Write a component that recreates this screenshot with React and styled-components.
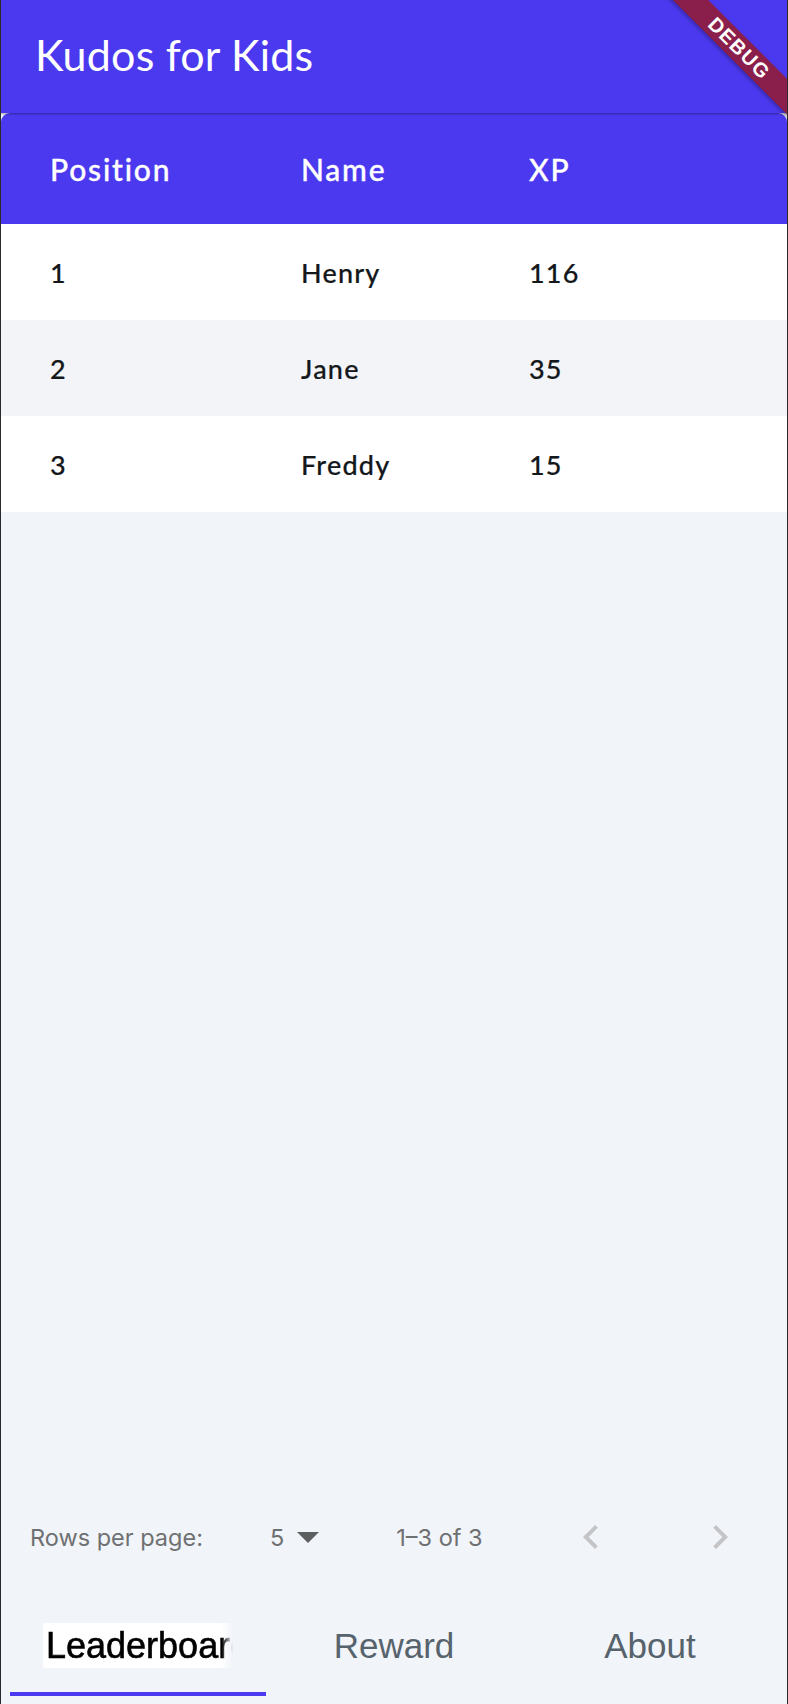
import React from 'react';
import styled, { createGlobalStyle } from 'styled-components';

const GlobalStyle = createGlobalStyle`
  html, body {
    margin: 0;
    padding: 0;
    background: #f1f4f8;
  }
  * { box-sizing: border-box; }
`;

const players = [
  { pos: 1, name: 'Henry', xp: 116 },
  { pos: 2, name: 'Jane', xp: 35 },
  { pos: 3, name: 'Freddy', xp: 15 },
];

const Page = styled.div`
  position: relative;
  width: 788px;
  height: 1704px;
  display: flex;
  flex-direction: column;
  background: #f1f4f8;
  border-left: 1px solid #2b2b2b;
  border-right: 1px solid #2b2b2b;
  overflow: hidden;
`;

const AppBar = styled.header`
  height: 113px;
  flex-shrink: 0;
  display: flex;
  align-items: center;
  padding-left: 34px;
  background: #4b39ef;
  box-shadow: 0 1px 2px rgba(0, 0, 0, 0.35);
  position: relative;
  z-index: 2;
`;

const Title = styled.h1`
  margin: 0 0 4px;
  font-family: Lato, 'Noto Sans', sans-serif;
  font-weight: 400;
  font-size: 43px;
  color: #ffffff;
  letter-spacing: 0.2px;
`;

const Banner = styled.div`
  position: absolute;
  top: 0;
  right: 0;
  width: 150px;
  height: 150px;
  overflow: hidden;
  pointer-events: none;
  z-index: 5;
`;

const Ribbon = styled.div`
  position: absolute;
  top: 36px;
  right: -62px;
  width: 220px;
  height: 25px;
  background: #8b1f4c;
  transform: rotate(45deg);
  display: flex;
  align-items: center;
  justify-content: center;
  box-shadow: 0 2px 4px rgba(0, 0, 0, 0.3);
  font-family: 'Liberation Sans', Arial, sans-serif;
  font-weight: 700;
  font-size: 20px;
  letter-spacing: 1.2px;
  color: #ffffff;
`;

const Table = styled.section`
  flex: 1;
  display: flex;
  flex-direction: column;
`;

const Row = styled.div`
  display: grid;
  grid-template-columns: 251px 228px 1fr;
  align-items: center;
  padding-left: 49px;
  height: ${p => (p.$head ? 111 : 96)}px;
  background: ${p => (p.$head ? '#4b39ef' : p.$alt ? '#f2f4f7' : '#ffffff')};
  border-radius: ${p => (p.$head ? '9px 9px 0 0' : '0')};
  color: ${p => (p.$head ? '#ffffff' : '#14181b')};
  font-family: Lato, 'Noto Sans', sans-serif;
  font-weight: 500;
  font-size: ${p => (p.$head ? 30 : 27)}px;
  letter-spacing: ${p => (p.$head ? 1.8 : 1.2)}px;
  -webkit-text-stroke: ${p => (p.$head ? '0.35px #ffffff' : '0.2px #14181b')};
`;

const Footer = styled.div`
  height: 100px;
  flex-shrink: 0;
  display: flex;
  align-items: center;
  padding-left: 29px;
  font-family: Inter, 'Liberation Sans', sans-serif;
  font-size: 23.5px;
  color: #6f7072;
`;

const RowsLabel = styled.span``;

const Dropdown = styled.span`
  margin-left: 67px;
  display: flex;
  align-items: center;
  gap: 13px;
`;

const Range = styled.span`
  margin-left: 77px;
`;

const PageButton = styled.button`
  width: 48px;
  height: 48px;
  border: 0;
  padding: 0;
  background: transparent;
  display: flex;
  align-items: center;
  justify-content: center;
  margin-left: ${p => p.$gap}px;
`;

const TabBar = styled.nav`
  height: 117px;
  flex-shrink: 0;
  display: grid;
  grid-template-columns: repeat(3, 1fr);
  padding: 0 9px 8px;
`;

const Tab = styled.div`
  display: flex;
  flex-direction: column;
  align-items: center;
  justify-content: flex-end;
`;

const TabLabel = styled.div`
  height: 45px;
  max-width: 190px;
  margin-bottom: 24px;
  display: flex;
  align-items: center;
  white-space: nowrap;
  overflow: hidden;
  font-family: 'Liberation Sans', Arial, sans-serif;
  font-size: ${p => (p.$active ? 36 : 35)}px;
  color: ${p => (p.$active ? '#000000' : '#57636c')};
  background: ${p => (p.$active ? '#ffffff' : 'transparent')};
  padding-left: ${p => (p.$active ? 3 : 0)}px;
  -webkit-text-stroke: ${p => (p.$active ? '0.6px #000000' : '0')};
  -webkit-mask-image: ${p => (p.$active ? 'linear-gradient(to right, #000 94%, transparent)' : 'none')};
`;

const Indicator = styled.div`
  align-self: stretch;
  height: 4px;
  background: ${p => (p.$active ? '#4b39ef' : 'transparent')};
`;

const Chevron = ({ dir }) => (
  <svg width="48" height="48" viewBox="0 0 24 24" fill="#c4c4c6">
    {dir === 'left'
      ? <path d="M15.41 7.41L14 6l-6 6 6 6 1.41-1.41L10.83 12z" />
      : <path d="M8.59 16.59L10 18l6-6-6-6-1.41 1.41L13.17 12z" />}
  </svg>
);

const tabs = ['Leaderboard', 'Reward', 'About'];

export default function App() {
  return (
    <>
      <GlobalStyle />
      <Page>
        <AppBar>
          <Title>Kudos for Kids</Title>
        </AppBar>
        <Banner>
          <Ribbon>DEBUG</Ribbon>
        </Banner>

        <Table>
          <Row $head>
            <span>Position</span>
            <span>Name</span>
            <span>XP</span>
          </Row>
          {players.map((p, i) => (
            <Row key={p.pos} $alt={i % 2 === 1}>
              <span>{p.pos}</span>
              <span>{p.name}</span>
              <span>{p.xp}</span>
            </Row>
          ))}
        </Table>

        <Footer>
          <RowsLabel>Rows per page:</RowsLabel>
          <Dropdown>
            5
            <svg width="22" height="11" viewBox="0 0 22 11">
              <path d="M0 0h22L11 11z" fill="#5d5e60" />
            </svg>
          </Dropdown>
          <Range>1–3 of 3</Range>
          <PageButton $gap={84}><Chevron dir="left" /></PageButton>
          <PageButton $gap={81}><Chevron dir="right" /></PageButton>
        </Footer>

        <TabBar>
          {tabs.map((t, i) => (
            <Tab key={t}>
              <TabLabel $active={i === 0}>{t}</TabLabel>
              <Indicator $active={i === 0} />
            </Tab>
          ))}
        </TabBar>
      </Page>
    </>
  );
}
